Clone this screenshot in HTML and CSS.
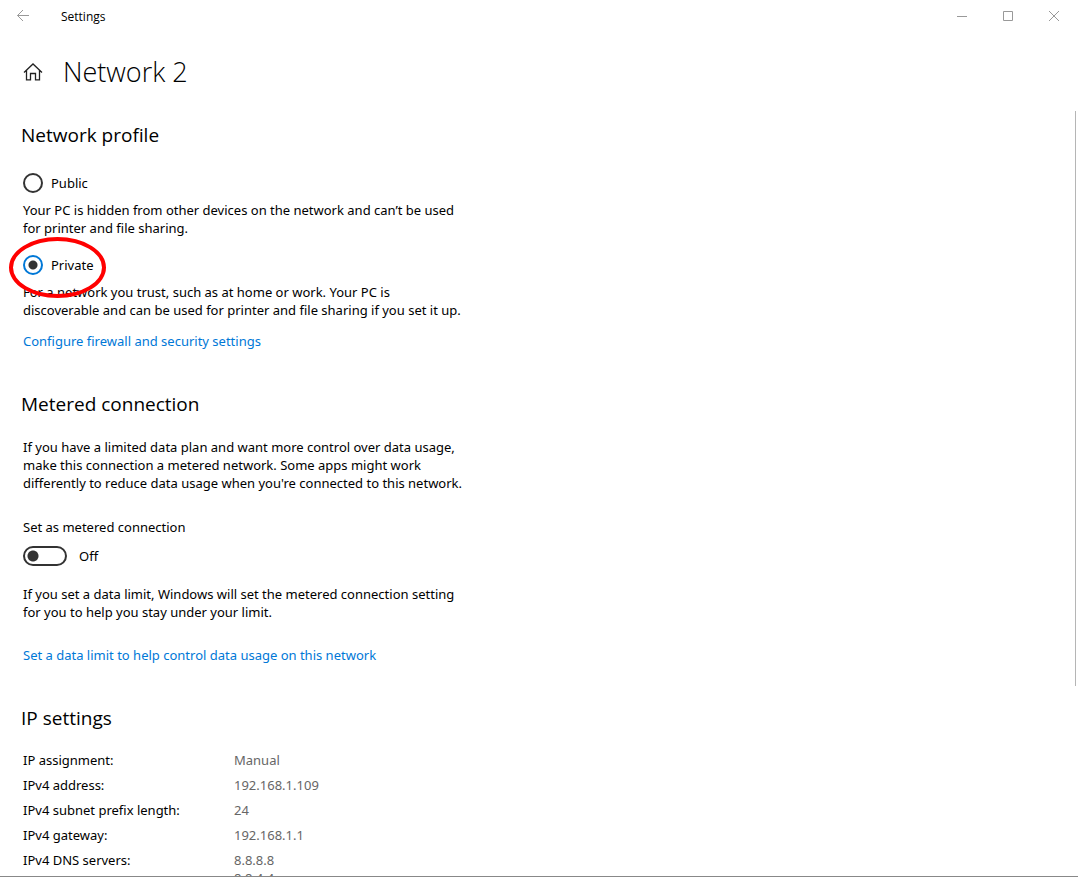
FILE: index.html
```html
<!DOCTYPE html>
<html lang="en">
<head>
    <meta charset="UTF-8">
    <meta name="viewport" content="width=device-width, initial-scale=1.0">
    <title>Settings</title>
    <link rel="stylesheet" href="styles.css">
</head>
<body>
    <div class="window">
        <header class="titlebar">
            <button type="button" class="back" aria-label="Back">
                <svg width="14" height="12" viewBox="0 0 14 12"><path d="M13 5.500H1.500M7 0L1.500 5.500L7 11"/></svg>
            </button>
            <span class="title">Settings</span>
            <button type="button" class="win-btn" aria-label="Minimize">
                <svg width="10" height="10" viewBox="0 0 10 10"><path d="M0 5.500h10"/></svg>
            </button>
            <button type="button" class="win-btn" aria-label="Maximize">
                <svg width="10" height="10" viewBox="0 0 10 10"><path d="M.5 .5h9v9h-9z"/></svg>
            </button>
            <button type="button" class="win-btn" aria-label="Close">
                <svg width="10" height="10" viewBox="0 0 10 10"><path d="M0 0l10 10M10 0L0 10"/></svg>
            </button>
        </header>
        <div class="page-head">
            <a href="#" class="home" aria-label="Home">
                <svg width="20" height="18" viewBox="0 0 20 18"><path d="M1 9.500L10 1l9 8.500M3.500 7.500v9.300h4v-6.300h5v6.300h4V7.500"/></svg>
            </a>
            <h1>Network 2</h1>
        </div>
        <main class="content">
            <div class="scroll-thumb"></div>
            <section class="profile">
                <h2>Network profile</h2>
                <div class="option">
                    <input type="radio" name="profile" id="public">
                    <label for="public">Public</label>
                </div>
                <p>Your PC is hidden from other devices on the network and can’t be used<br>for printer and file sharing.</p>
                <div class="option marked">
                    <input type="radio" name="profile" id="private" checked>
                    <label for="private">Private</label>
                    <span class="marker"></span>
                </div>
                <p>For a network you trust, such as at home or work. Your PC is<br>discoverable and can be used for printer and file sharing if you set it up.</p>
                <a href="#" class="link firewall">Configure firewall and security settings</a>
            </section>
            <section class="metered">
                <h2>Metered connection</h2>
                <p>If you have a limited data plan and want more control over data usage,<br>make this connection a metered network. Some apps might work<br>differently to reduce data usage when you're connected to this network.</p>
                <label for="metered" class="toggle-label">Set as metered connection</label>
                <div class="toggle-row">
                    <input type="checkbox" class="toggle" id="metered">
                    <span>Off</span>
                </div>
                <p>If you set a data limit, Windows will set the metered connection setting<br>for you to help you stay under your limit.</p>
                <a href="#" class="link">Set a data limit to help control data usage on this network</a>
            </section>
            <section class="ip">
                <h2>IP settings</h2>
                <table>
                    <tr><th scope="row">IP assignment:</th><td>Manual</td></tr>
                    <tr><th scope="row">IPv4 address:</th><td>192.168.1.109</td></tr>
                    <tr><th scope="row">IPv4 subnet prefix length:</th><td>24</td></tr>
                    <tr><th scope="row">IPv4 gateway:</th><td>192.168.1.1</td></tr>
                    <tr><th scope="row">IPv4 DNS servers:</th><td>8.8.8.8<br>8.8.4.4</td></tr>
                </table>
            </section>
        </main>
    </div>
</body>
</html>
```

FILE: styles.css
```css
* {
    box-sizing: border-box;
}
body {
    margin: 0;
    background: #fff;
    color: #000;
    font-family: "Noto Sans", "Open Sans", sans-serif;
    font-size: 13px;
    line-height: 18px;
}
.window {
    display: flex;
    flex-direction: column;
    height: 100vh;
    overflow: hidden;
    border-bottom: 1px solid #888;
}
button {
    display: flex;
    align-items: center;
    justify-content: center;
    padding: 0;
    border: none;
    background: none;
    height: 32px;
    width: 46px;
}
svg {
    fill: none;
    stroke: #999;
}
.titlebar {
    display: flex;
    align-items: center;
    height: 32px;
    flex: none;
    padding-right: 1px;
}
.title {
    flex: 1;
    padding: 1px 0 0 15px;
    font-family: "Open Sans", sans-serif;
    font-size: 12px;
}
.page-head {
    display: flex;
    align-items: center;
    gap: 20px;
    height: 78px;
    flex: none;
    padding: 2px 23px 0;
}
.home {
    display: flex;
}
.home svg {
    stroke: #222;
    stroke-width: 1.3;
}
h1, h2 {
    font-family: "Open Sans", sans-serif;
}
h1 {
    margin: 0;
    font-size: 27px;
    line-height: 36px;
    font-weight: 350;
}
.content {
    position: relative;
    flex: 1;
    min-height: 0;
    overflow: hidden;
    padding: 11px 23px 0;
}
.scroll-thumb {
    position: absolute;
    top: 1px;
    right: 2px;
    width: 1px;
    height: 75%;
    background: #b5b5b5;
}
section {
    margin-bottom: 40px;
}
h2 {
    margin: 0 0 20px -2px;
    font-size: 19px;
    line-height: 28px;
    font-weight: 400;
}
p {
    margin: 0;
}
.option {
    display: flex;
    align-items: center;
    gap: 8px;
    height: 20px;
    margin: 18px 0 8px;
}
.profile h2 {
    margin-bottom: 24px;
}
input {
    appearance: none;
    margin: 0;
    flex: none;
    background: #fff;
    border: 2px solid #333;
}
input[type="radio"] {
    width: 20px;
    height: 20px;
    border-radius: 50%;
}
input[type="radio"]:checked {
    border-color: #0078d7;
    background: radial-gradient(circle, #333 4px, #fff 5px);
}
.marked {
    position: relative;
}
.marker {
    position: absolute;
    left: -14px;
    top: -18px;
    width: 97px;
    height: 61px;
    border: 4px solid #f00;
    border-radius: 50%;
}
.link {
    display: block;
    width: fit-content;
    color: #0078d7;
    text-decoration: none;
}
.firewall {
    margin-top: 13px;
}
.toggle-label {
    display: block;
    margin: 26px 0 10px;
}
.toggle-row {
    display: flex;
    align-items: center;
    gap: 12px;
    height: 20px;
    margin-bottom: 19px;
}
.toggle {
    width: 44px;
    height: 20px;
    border-radius: 10px;
    background: radial-gradient(circle at 8px 8px, #333 5px, #fff 6px) no-repeat;
}
.metered .link {
    margin-top: 25px;
}
.ip h2 {
    margin-bottom: 16px;
}
table {
    border-collapse: collapse;
}
th, td {
    padding: 3px 0 4px;
    text-align: left;
    vertical-align: top;
    font-weight: 400;
}
th {
    width: 211px;
}
td {
    color: #666;
}
```
